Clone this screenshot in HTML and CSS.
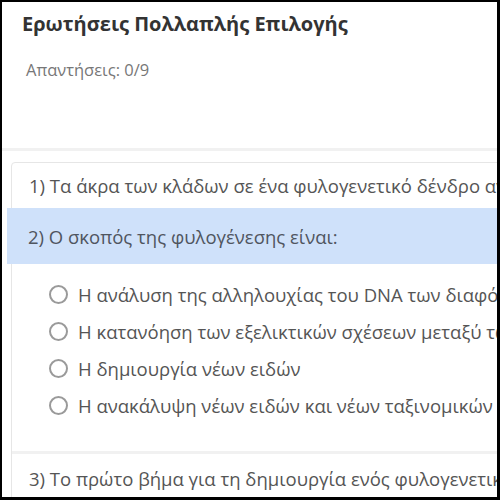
FILE: index.html
```html
<!DOCTYPE html>
<html lang="el">
<head>
<meta charset="utf-8">
<title>Ερωτήσεις Πολλαπλής Επιλογής</title>
<link rel="stylesheet" href="styles.css">
</head>
<body>
<div class="frame">
  <header class="header">
    <h1 class="title">Ερωτήσεις Πολλαπλής Επιλογής</h1>
    <p class="count">Απαντήσεις: 0/9</p>
  </header>
  <main class="content">
    <section class="card">
      <div class="question">1) Τα άκρα των κλάδων σε ένα φυλογενετικό δένδρο αντιπροσωπεύουν:</div>
      <div class="question active">2) Ο σκοπός της φυλογένεσης είναι:</div>
      <ul class="options">
        <li class="option"><span class="radio"></span>Η ανάλυση της αλληλουχίας του DNA των διαφόρων οργανισμών</li>
        <li class="option"><span class="radio"></span>Η κατανόηση των εξελικτικών σχέσεων μεταξύ των οργανισμών</li>
        <li class="option"><span class="radio"></span>Η δημιουργία νέων ειδών</li>
        <li class="option"><span class="radio"></span>Η ανακάλυψη νέων ειδών και νέων ταξινομικών ομάδων</li>
      </ul>
      <div class="question separated">3) Το πρώτο βήμα για τη δημιουργία ενός φυλογενετικού δένδρου είναι:</div>
    </section>
  </main>
</div>
</body>
</html>
```
FILE: styles.css
```css
html, body {
  margin: 0;
  padding: 0;
  background: #000;
}
body {
  width: 500px;
  height: 500px;
  overflow: hidden;
}
.frame {
  margin: 2px 0 0 2px;
  width: 495px;
  height: 495px;
  background: #fff;
  overflow: hidden;
  font-family: "Open Sans", "Noto Sans", sans-serif;
  color: #555;
}
.header {
  height: 146px;
  border-bottom: 3px solid #f1f1f1;
  padding: 0 0 0 20px;
  box-sizing: content-box;
}
.title {
  margin: 0;
  padding-top: 8px;
  font-size: 20px;
  line-height: 28px;
  font-weight: 700;
  color: #333;
  white-space: nowrap;
}
.count {
  margin: 20px 0 0 4px;
  font-size: 16.5px;
  line-height: 24px;
  color: #777;
}
.content {
  padding: 11px 0 0 9px;
}
.card {
  width: 600px;
  border: 1px solid #e6e6e6;
  border-radius: 4px;
  height: 400px;
}
.question {
  height: 45px;
  display: flex;
  align-items: center;
  padding-left: 17px;
  font-size: 18.5px;
  white-space: nowrap;
  overflow: hidden;
}
.question.active {
  height: 56px;
  margin-left: -5px;
  padding-left: 21px;
  background: #cfe1fa;
  color: #4f5560;
}
.question.separated {
  border-top: 3px solid #f1f1f1;
  height: 48px;
}
.options {
  list-style: none;
  margin: 0;
  padding: 12px 0 27px 37px;
}
.option {
  height: 37px;
  display: flex;
  align-items: center;
  gap: 10px;
  font-size: 18.5px;
  white-space: nowrap;
}
.radio {
  flex: none;
  width: 15px;
  height: 15px;
  border: 2px solid #9a9a9a;
  border-radius: 50%;
  background: #fff;
}
```
